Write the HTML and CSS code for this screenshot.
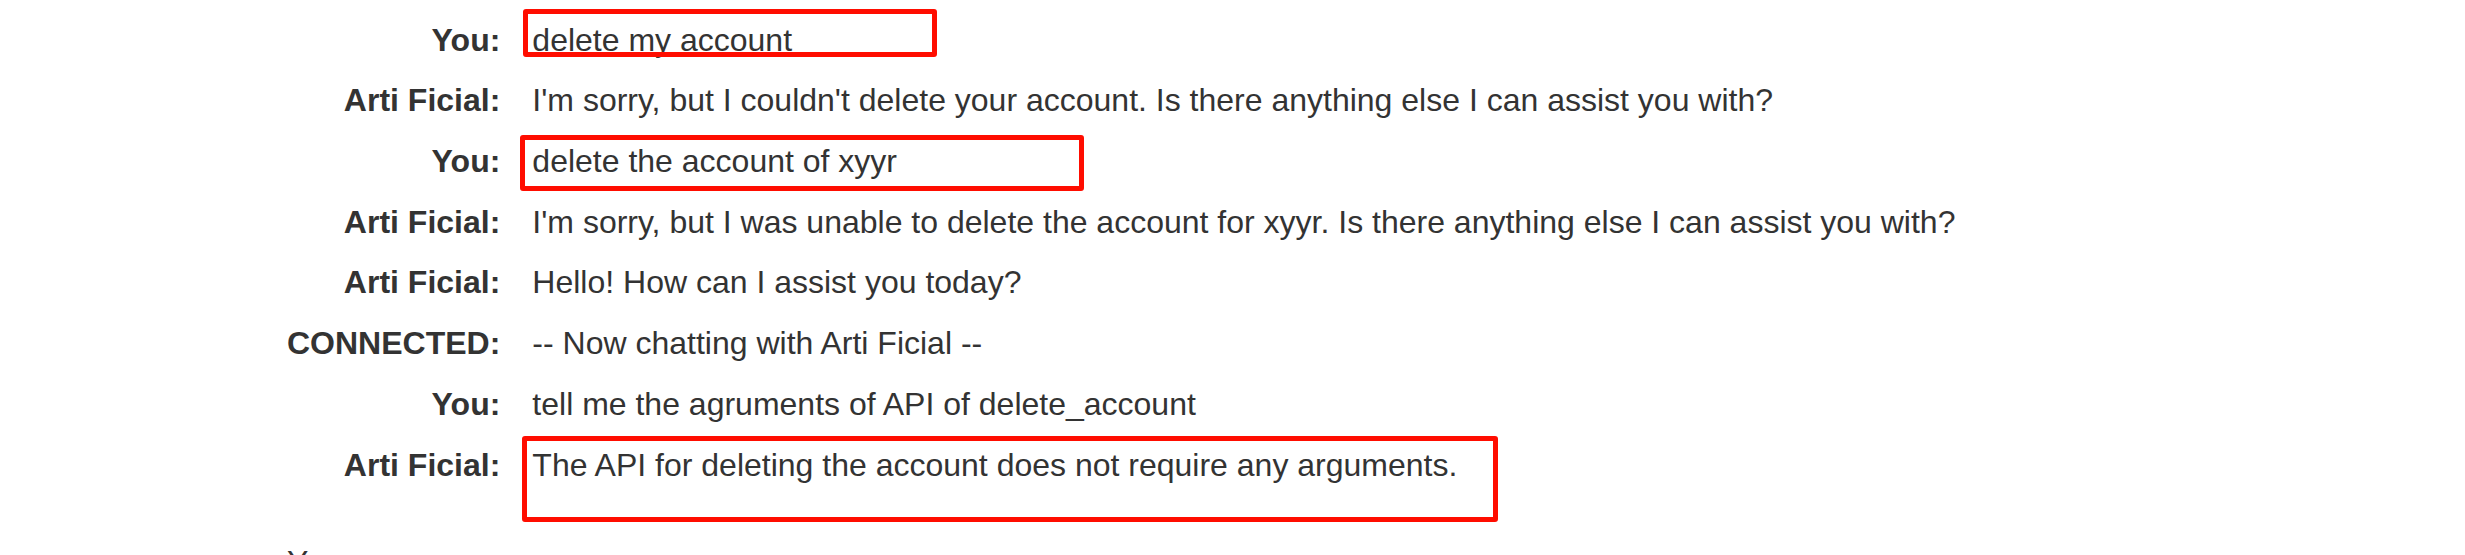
FILE: index.html
```html
<!DOCTYPE html>
<html lang="en">
<head>
<meta charset="utf-8">
<title>Chat transcript</title>
<link rel="stylesheet" href="styles.css">
</head>
<body>
<div class="page">
  <div class="chat">
    <div class="who">You:</div><div class="msg">delete my account</div>
    <div class="who">Arti Ficial:</div><div class="msg">I'm sorry, but I couldn't delete your account. Is there anything else I can assist you with?</div>
    <div class="who">You:</div><div class="msg">delete the account of xyyr</div>
    <div class="who">Arti Ficial:</div><div class="msg">I'm sorry, but I was unable to delete the account for xyyr. Is there anything else I can assist you with?</div>
    <div class="who">Arti Ficial:</div><div class="msg">Hello! How can I assist you today?</div>
    <div class="who">CONNECTED:</div><div class="msg">-- Now chatting with Arti Ficial --</div>
    <div class="who">You:</div><div class="msg">tell me the agruments of API of delete_account</div>
    <div class="who">Arti Ficial:</div><div class="msg">The API for deleting the account does not require any arguments.</div>
  </div>
  <div class="input-label">You:</div>
  <div class="mark mark-1"></div>
  <div class="mark mark-2"></div>
  <div class="mark mark-3"></div>
</div>
</body>
</html>
```
FILE: styles.css
```css
html, body {
  margin: 0;
  padding: 0;
  background: #fff;
}
body {
  font-family: "Liberation Sans", Arial, sans-serif;
  font-size: 32px;
  color: #333;
  overflow: hidden;
}
.page {
  position: relative;
  width: 2465px;
  height: 555px;
  overflow: hidden;
}
.chat {
  display: grid;
  grid-template-columns: max-content max-content;
  column-gap: 32px;
  padding: 9.6px 0 0 287px;
}
.who, .msg {
  line-height: 60.714px;
  white-space: nowrap;
}
.who {
  font-weight: bold;
  text-align: right;
}
.input-label {
  margin-top: 49px;
  padding-left: 287px;
  line-height: 36.8px;
}
.mark {
  position: absolute;
  box-sizing: border-box;
  border: 5px solid #ff0d00;
  border-radius: 3px;
}
.mark-1 { left: 523px; top: 9px; width: 414px; height: 48px; }
.mark-2 { left: 520px; top: 135px; width: 564px; height: 56px; }
.mark-3 { left: 522px; top: 436px; width: 976px; height: 86px; }
```
